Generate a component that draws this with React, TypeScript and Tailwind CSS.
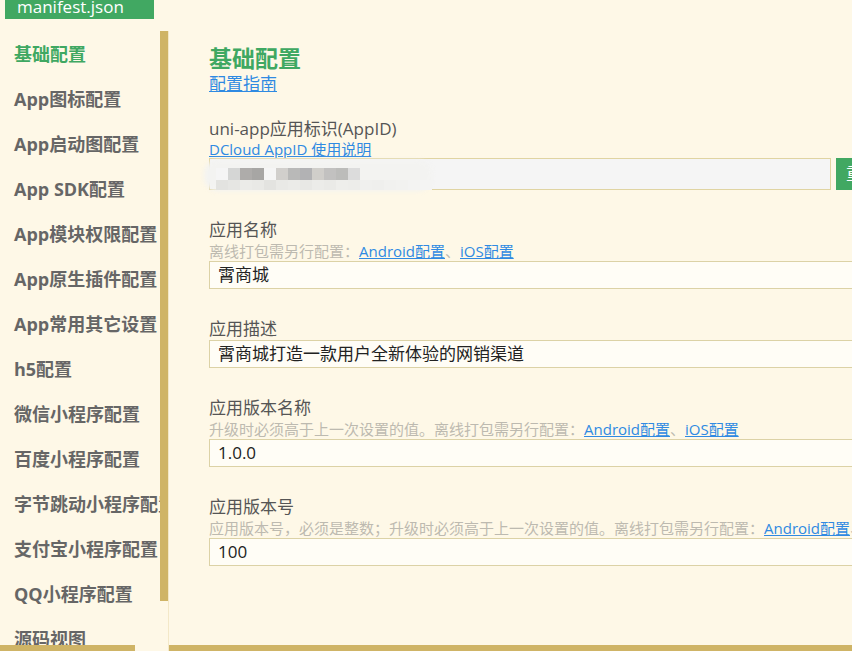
const menu = [
  '基础配置',
  'App图标配置',
  'App启动图配置',
  'App SDK配置',
  'App模块权限配置',
  'App原生插件配置',
  'App常用其它设置',
  'h5配置',
  '微信小程序配置',
  '百度小程序配置',
  '字节跳动小程序配置',
  '支付宝小程序配置',
  'QQ小程序配置',
  '源码视图',
];

// 打码的 AppID 马赛克
const mosaicTop = ['#f5f5f5', '#d5d6d5', '#aeacaa', '#a7a6a4', '#f5f5f5', '#d1cfcc', '#b9b9b8', '#b2b2b4', '#d0ceca', '#c2c1c0', '#bcbcba', '#dcdcdc'];
const mosaicBottom = ['#e3e3e0', '#e6e6e3', '#ebebe8', '#e9e9e6', '#e3e3e0', '#e9e9e6', '#ebebe8', '#e8e8e5', '#ecece9', '#eaeae7', '#eeeeeb', '#ededea', '#f0f0ee', '#efefed', '#f1f1ef', '#f2f2f0', '#f3f3f2', '#f4f4f3'];

function HintLinks({prefix}: {prefix: string}) {
  return (
    <p className="text-[15px] leading-[20px] text-[#bdbab0] whitespace-nowrap">
      {prefix}
      <a className="text-[#2f8ae2] underline">Android配置</a>、
      <a className="text-[#2f8ae2] underline">iOS配置</a>
    </p>
  );
}

function Field({label, hint, value}: {label: string; hint?: string; value: string}) {
  return (
    <div className="mt-[29px]">
      <p className="text-[17px] leading-[22px] text-[#555]">{label}</p>
      {hint !== undefined && <HintLinks prefix={hint}/>}
      <div className="w-[700px] h-[28px] border border-[#dcd2a6] bg-[#fffdf6] pl-[8px] text-[17px] leading-[26px] text-[#222]">
        {value}
      </div>
    </div>
  );
}

export default function App() {
  return (
    <div className="w-[852px] h-[651px] bg-[#fef8e7] overflow-hidden flex flex-col font-['Open_Sans','Noto_Sans_CJK_SC',sans-serif]">
      {/* 标签页 */}
      <div className="h-[31px] shrink-0 pl-[5px]">
        <div className="w-[149px] h-[19px] bg-[#41a862] text-white text-[17px] leading-[14px] pl-[12px] overflow-hidden">
          manifest.json
        </div>
      </div>

      <div className="flex flex-1 min-h-0">
        {/* 左侧菜单 */}
        <div className="relative w-[169px] shrink-0 border-r border-[#f3e8c8] overflow-hidden pt-[1px]">
          {menu.map((item, i) => (
            <div
              key={item}
              className={`h-[45px] leading-[45px] pl-[14px] text-[18px] font-bold whitespace-nowrap ${i === 0 ? 'text-[#3fa862]' : 'text-[#666]'}`}
            >
              {item}
            </div>
          ))}
          <div className="absolute top-0 right-0 w-[8px] h-[570px] bg-[#cfb466]"/>
          <div className="absolute bottom-0 left-0 w-[135px] h-[6px] bg-[#cfb466]"/>
        </div>

        {/* 内容 */}
        <div className="relative flex-1 overflow-hidden pl-[40px]">
          <h2 className="mt-[12px] text-[23px] leading-[30px] font-bold text-[#3fa862]">基础配置</h2>
          <a className="block w-fit text-[17px] leading-[22px] text-[#2f8ae2] underline">配置指南</a>

          <p className="mt-[23px] text-[17px] leading-[22px] text-[#555]">uni-app应用标识(AppID)</p>
          <a className="block w-fit text-[15px] leading-[18px] text-[#2f8ae2] underline">DCloud AppID 使用说明</a>
          <div className="flex gap-[5px]">
            <div className="relative w-[622px] h-[32px] shrink-0 border border-[#e0d4a2] bg-[#f5f5f5]">
              <div className="absolute left-[-6px] top-[1px] w-[228px] h-[31px] rounded-[14px] bg-[#f3f3f1] blur-[2px]"/>
              <div className="absolute left-[6px] top-[9px] flex">
                {mosaicTop.map((c, i) => (
                  <div key={i} className="w-[12px] h-[12px]" style={{backgroundColor: c}}/>
                ))}
              </div>
              <div className="absolute left-[6px] top-[21px] flex">
                {mosaicBottom.map((c, i) => (
                  <div key={i} className="w-[12px] h-[10px]" style={{backgroundColor: c}}/>
                ))}
              </div>
            </div>
            <div className="w-[80px] h-[32px] shrink-0 bg-[#41a862] text-white text-[17px] leading-[32px] pl-[10px] whitespace-nowrap">
              重新获取
            </div>
          </div>

          <Field label="应用名称" hint="离线打包需另行配置：" value="霄商城"/>
          <Field label="应用描述" value="霄商城打造一款用户全新体验的网销渠道"/>
          <Field label="应用版本名称" hint="升级时必须高于上一次设置的值。离线打包需另行配置：" value="1.0.0"/>
          <Field label="应用版本号" hint="应用版本号，必须是整数；升级时必须高于上一次设置的值。离线打包需另行配置：" value="100"/>

          <div className="absolute bottom-0 left-0 right-0 h-[6px] bg-[#cfb466]"/>
        </div>
      </div>
    </div>
  );
}
